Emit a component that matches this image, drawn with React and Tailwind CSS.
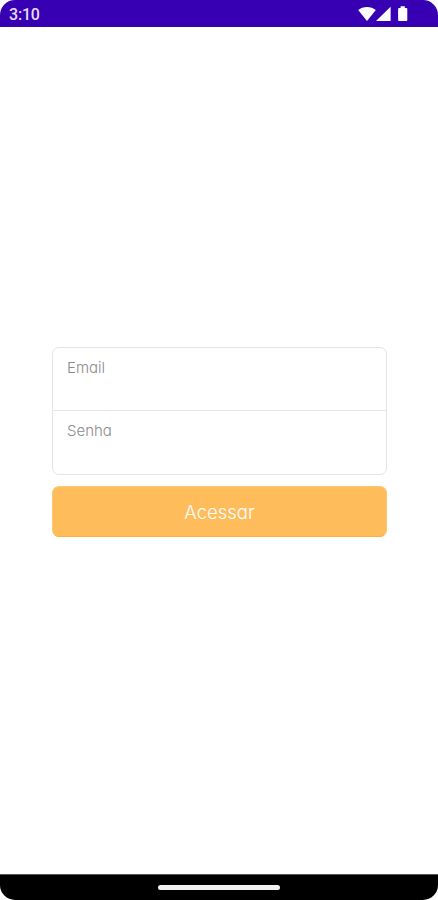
import React, { useState } from 'react';

const StatusIcons = () => (
  <svg width="52" height="18" viewBox="0 0 52 18" fill="#fff">
    {/* wifi */}
    <path d="M0.2 5.1 C5 0.9 13 0.9 17.8 5.1 L9 15.9 Z" />
    {/* signal */}
    <path d="M18 15.9 L32.6 1.8 V15.9 Z" />
    {/* battery */}
    <path d="M42.6 1.2 h4.2 v1.7 h1.5 q1 0 1 1 v11 q0 1-1 1 h-7.2 q-1 0-1-1 V3.9 q0-1 1-1 h1.5 Z" />
  </svg>
);

const Login = () => {
  const [email, setEmail] = useState('');
  const [senha, setSenha] = useState('');

  return (
    <div className="h-[900px] w-[438px] flex flex-col bg-white rounded-[15px] overflow-hidden">
      {/* Status bar */}
      <header className="h-[27px] shrink-0 flex items-center justify-between bg-[#3700b3] border-b border-[#2d0b9c] pl-[9px] pr-[28px]">
        <span className="pt-[3px] font-['Roboto',sans-serif] text-[16px] leading-none tracking-[-0.2px] font-medium text-[#e6dcfa]">
          3:10
        </span>
        <div className="pt-[2px]">
          <StatusIcons />
        </div>
      </header>

      {/* Login form */}
      <form
        className="flex-1 pt-[320px] pl-[52px] pr-[51px] font-['Inter',sans-serif] font-light [font-feature-settings:'cv11']"
        onSubmit={(e) => e.preventDefault()}
      >
        <div className="h-[128px] flex flex-col rounded-[7px] border border-[#e3e4e6]">
          <label className="h-[63px] flex flex-col border-b border-[#e3e4e6] px-[14px] pt-[10px]">
            <span className="text-[15px] leading-5 text-[#8a8a8a]">Email</span>
            <input
              type="email"
              className="w-full h-6 outline-none"
              value={email}
              onChange={(e) => setEmail(e.target.value)}
            />
          </label>
          <label className="flex-1 flex flex-col px-[14px] pt-[10px]">
            <span className="text-[15px] leading-5 text-[#8a8a8a]">Senha</span>
            <input
              type="password"
              className="w-full h-6 outline-none"
              value={senha}
              onChange={(e) => setSenha(e.target.value)}
            />
          </label>
        </div>
        <button
          type="submit"
          className="mt-[11px] h-[51px] w-full rounded-[7px] border border-[#fdc77a] border-b-[#fbb040] bg-[#ffbc5a] pt-[3px] text-[18.5px] text-white"
        >
          Acessar
        </button>
      </form>

      {/* Navigation bar */}
      <footer className="h-[26px] shrink-0 flex items-center justify-center bg-black border-t border-[#555]">
        <div className="h-[5px] w-[122px] rounded-full bg-[#f2f2f2]" />
      </footer>
    </div>
  );
};

export default Login;
